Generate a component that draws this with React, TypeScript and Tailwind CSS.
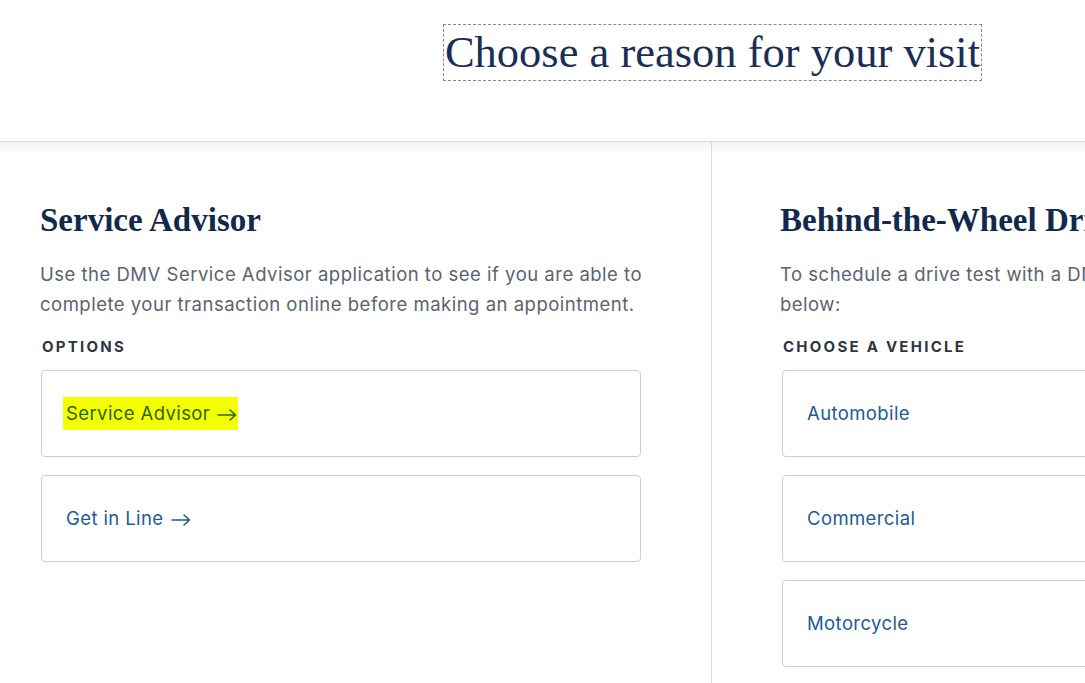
import React from "react";

const serif = { fontFamily: '"Liberation Serif", "Times New Roman", serif' };

function Arrow() {
  return (
    <svg
      width="20"
      height="12"
      viewBox="0 0 20 12"
      fill="none"
      stroke="currentColor"
      strokeWidth="1.6"
      strokeLinecap="round"
      strokeLinejoin="round"
      className="ml-[7px] inline-block align-[-1px]"
    >
      <path d="M1 6h17.5M13 1l5.5 5-5.5 5" />
    </svg>
  );
}

function Card({ label, arrow, highlight }: { label: string; arrow?: boolean; highlight?: boolean }) {
  return (
    <a
      href="#"
      className="flex h-[87px] items-center rounded-[4px] border border-[#c6d1dd] bg-white pl-[24px]"
    >
      <span
        className={
          highlight
            ? "-ml-[3px] bg-[#f4ff00] py-[3px] pl-[3px] pr-[1px] text-[#2e6410]"
            : "text-[#215b95]"
        }
      >
        {label}
        {arrow ? <Arrow /> : null}
      </span>
    </a>
  );
}

export default function App() {
  return (
    <div
      className="h-[683px] w-[1085px] overflow-hidden bg-white tracking-[0.4px]"
      style={{ fontFamily: 'Inter, "Open Sans", sans-serif' }}
    >
      <div className="w-[1425px]">
        <header className="flex h-[142px] justify-center border-b border-[#dcdcdc] pt-[24px] tracking-normal">
          <div className="h-[58px]">
            <h1
              className="border border-dashed border-[#8a8a8a] px-[1px] text-[44.5px] leading-[55px] text-[#1a2f55]"
              style={serif}
            >
              Choose a reason for your visit
            </h1>
          </div>
        </header>
        <div className="h-[14px] bg-gradient-to-b from-[#f3f3f3] to-white" />
        <div className="-mt-[14px] flex">
          <section className="w-[712px] shrink-0 border-r border-[#dcdcdc] pb-[40px] pl-[40px] pr-[60px] pt-[56px]">
            <h2 className="text-[33px] font-bold leading-[44px] tracking-normal text-[#13294b]" style={serif}>
              Service Advisor
            </h2>
            <p className="mt-[17px] text-[18.5px] leading-[30px] tracking-[0.5px] text-[#5b6370]">
              Use the DMV Service Advisor application to see if you are able to
              <br />
              complete your transaction online before making an appointment.
            </p>
            <div className="mt-[18px] pl-[2px] text-[15px] font-bold uppercase leading-[20px] tracking-[0.15em] text-[#2f3542]">
              Options
            </div>
            <div className="mt-[13px] flex w-[601px] flex-col gap-[18px] pl-[1px] text-[18.5px]">
              <Card label="Service Advisor" arrow highlight />
              <Card label="Get in Line" arrow />
            </div>
          </section>
          <section className="w-[713px] shrink-0 pb-[40px] pl-[68px] pr-[40px] pt-[56px]">
            <h2 className="whitespace-nowrap text-[33px] font-bold leading-[44px] tracking-normal text-[#13294b]" style={serif}>
              Behind-the-Wheel Drive Test
            </h2>
            <p className="mt-[17px] whitespace-nowrap text-[18.5px] leading-[30px] tracking-[0.5px] text-[#5b6370]">
              To schedule a drive test with a DMV examiner, select a vehicle type
              <br />
              below:
            </p>
            <div className="mt-[18px] pl-[3px] text-[15px] font-bold uppercase leading-[20px] tracking-[0.15em] text-[#2f3542]">
              Choose a Vehicle
            </div>
            <div className="mt-[13px] flex flex-col gap-[18px] pl-[2px] text-[18.5px]">
              <Card label="Automobile" />
              <Card label="Commercial" />
              <Card label="Motorcycle" />
            </div>
          </section>
        </div>
      </div>
    </div>
  );
}
